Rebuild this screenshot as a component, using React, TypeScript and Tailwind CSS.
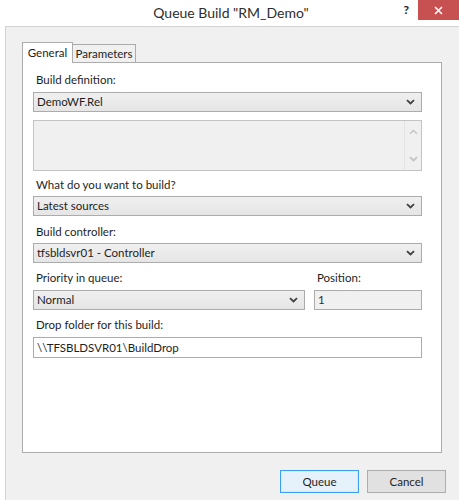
import React from "react";

const Chevron = ({ color = "#404040" }: { color?: string }) => (
  <svg width="9" height="6" viewBox="0 0 9 6" className="block">
    <polyline points="1,1.2 4.5,4.5 8,1.2" fill="none" stroke={color} strokeWidth="1.8" />
  </svg>
);

const ChevronUp = ({ color = "#c4c4c4" }: { color?: string }) => (
  <svg width="9" height="6" viewBox="0 0 9 6" className="block">
    <polyline points="1,4.8 4.5,1.5 8,4.8" fill="none" stroke={color} strokeWidth="1.5" />
  </svg>
);

const Select = ({ value, className = "" }: { value: string; className?: string }) => (
  <div
    className={`h-[20px] flex items-center justify-between border border-[#acacac] bg-gradient-to-b from-[#f0f0f0] to-[#e5e5e5] pl-[3px] pr-[6px] ${className}`}
  >
    <span className="text-[11.5px] leading-none text-[#1e1e1e]">{value}</span>
    <Chevron />
  </div>
);

const Label = ({ children, className = "" }: { children: React.ReactNode; className?: string }) => (
  <div className={`h-[16px] leading-[16px] text-[11.5px] text-[#1e1e1e] pl-[3px] ${className}`}>{children}</div>
);

export default function App() {
  return (
    <div
      className="w-[459px] h-[500px] bg-white flex flex-col overflow-hidden"
      style={{ fontFamily: 'Lato, "Noto Sans", sans-serif' }}
    >
      {/* Title bar */}
      <div className="h-[26px] grid grid-cols-[1fr_auto_1fr] items-start">
        <div />
        <div className="pt-[2px] pl-[3px] text-[14px] leading-[22px] text-[#2e2e2e]">Queue Build "RM_Demo"</div>
        <div className="flex justify-end items-start">
          <div className="pt-[2px] mr-[9px] text-[12px] font-bold leading-[16px] text-[#202020]">?</div>
          <div className="w-[41px] h-[20px] bg-[#c75050] flex items-center justify-center">
            <svg width="9" height="9" viewBox="0 0 9 9">
              <path d="M1 1 L8 8 M8 1 L1 8" stroke="white" strokeWidth="1.6" />
            </svg>
          </div>
        </div>
      </div>

      {/* Body */}
      <div className="flex-1 ml-[5px] border-l border-t border-[#d4d4d4] bg-[#f0f0f0] pt-[15px] pl-[16px] flex flex-col">
        {/* Tabs */}
        <div className="w-[420px] flex items-end h-[20px]">
          <div className="relative z-10 h-[21px] w-[51px] bg-white border border-b-0 border-[#acacac] text-[11.5px] text-[#1e1e1e] flex items-center justify-center -mb-px">
            General
          </div>
          <div className="h-[18px] w-[63px] bg-[#f0f0f0] border border-l-0 border-b-0 border-[#acacac] text-[11.5px] text-[#1e1e1e] flex items-center justify-center">
            Parameters
          </div>
        </div>

        {/* Panel */}
        <div className="w-[420px] h-[391px] bg-white border border-[#acacac] pt-[9px] pl-[10px] pr-[19px] flex flex-col">
          <Label>Build definition:</Label>
          <Select value="DemoWF.Rel" className="mt-[4px]" />

          <div className="mt-[8px] h-[51px] border border-[#c3c3c3] bg-[#f0f0f0] flex justify-end">
            <div className="w-[17px] border-l border-[#e4e4e4] flex flex-col items-center justify-between py-[8px]">
              <ChevronUp />
              <Chevron color="#c4c4c4" />
            </div>
          </div>

          <Label className="mt-[6px]">What do you want to build?</Label>
          <Select value="Latest sources" className="mt-[3px]" />

          <Label className="mt-[8px]">Build controller:</Label>
          <Select value="tfsbldsvr01 - Controller" className="mt-[3px]" />

          <div className="mt-[7px] flex gap-[9px]">
            <div className="flex-1 flex flex-col">
              <Label>Priority in queue:</Label>
              <Select value="Normal" className="mt-[4px]" />
            </div>
            <div className="w-[108px] flex flex-col">
              <Label className="pl-[3px]">Position:</Label>
              <div className="mt-[4px] h-[20px] border border-[#acacac] bg-[#f0f0f0] flex items-center pl-[3px] text-[11.5px] text-[#3b1f4f]">
                1
              </div>
            </div>
          </div>

          <Label className="mt-[7px]">Drop folder for this build:</Label>
          <div className="mt-[4px] h-[21px] border border-[#acacac] bg-white flex items-center pl-[3px] text-[11.5px] text-[#1e1e1e]">
            \\TFSBLDSVR01\BuildDrop
          </div>
        </div>

        {/* Buttons */}
        <div className="mt-[17px] flex justify-end gap-[8px] pr-[13px]">
          <div className="w-[79px] h-[23px] border border-[#3c9ff0] bg-[#e5f1fb] flex items-center justify-center text-[11.5px] text-[#1e1e1e] shadow-[inset_0_0_0_1px_#d8e9f8]">
            Queue
          </div>
          <div className="w-[79px] h-[23px] border border-[#adadad] bg-[#e1e1e1] flex items-center justify-center text-[11.5px] text-[#1e1e1e]">
            Cancel
          </div>
        </div>
      </div>
    </div>
  );
}
